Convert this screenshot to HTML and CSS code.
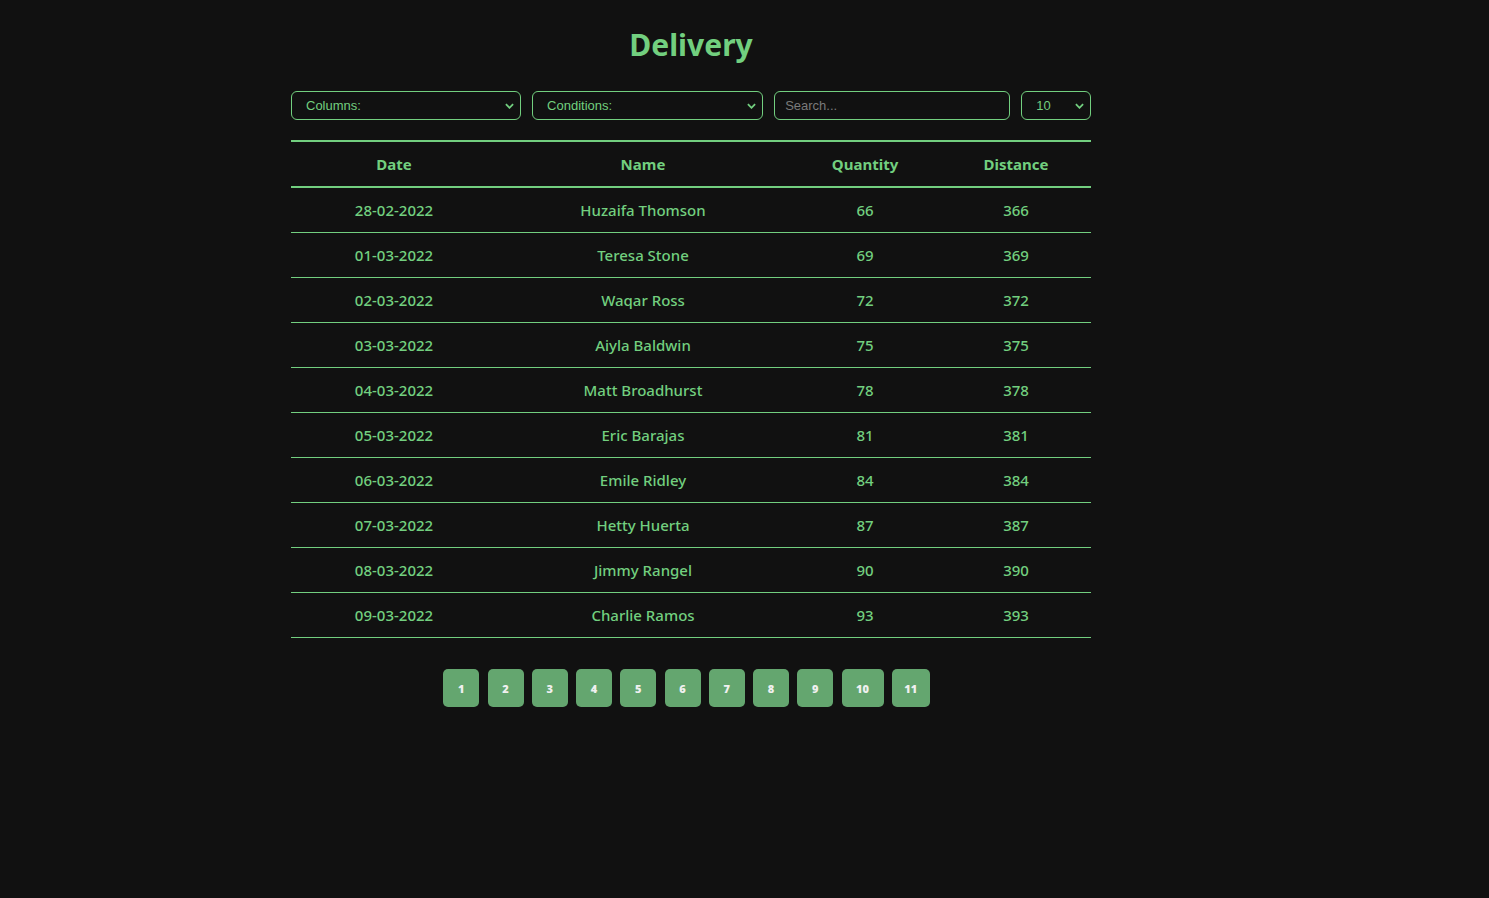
FILE: index.html
```html
<!DOCTYPE html>
<html>
<head>
<meta charset="utf-8">
<link rel="stylesheet" href="styles.css">
</head>
<body>
<main class="wrap">
  <h1 class="title">Delivery</h1>
  <div class="controls">
    <div class="select sel-cols"><span>Columns:</span><svg viewBox="0 0 10 6" class="chev"><path d="M1 1 L5 5 L9 1" /></svg></div>
    <div class="select sel-cond"><span>Conditions:</span><svg viewBox="0 0 10 6" class="chev"><path d="M1 1 L5 5 L9 1" /></svg></div>
    <input class="search" type="text" placeholder="Search...">
    <div class="select sel-size"><span>10</span><svg viewBox="0 0 10 6" class="chev"><path d="M1 1 L5 5 L9 1" /></svg></div>
  </div>
  <table class="grid">
    <colgroup><col class="c1"><col class="c2"><col class="c3"><col class="c4"></colgroup>
    <thead>
      <tr><th>Date</th><th>Name</th><th>Quantity</th><th>Distance</th></tr>
    </thead>
    <tbody>
      <tr><td>28-02-2022</td><td>Huzaifa Thomson</td><td>66</td><td>366</td></tr>
      <tr><td>01-03-2022</td><td>Teresa Stone</td><td>69</td><td>369</td></tr>
      <tr><td>02-03-2022</td><td>Waqar Ross</td><td>72</td><td>372</td></tr>
      <tr><td>03-03-2022</td><td>Aiyla Baldwin</td><td>75</td><td>375</td></tr>
      <tr><td>04-03-2022</td><td>Matt Broadhurst</td><td>78</td><td>378</td></tr>
      <tr><td>05-03-2022</td><td>Eric Barajas</td><td>81</td><td>381</td></tr>
      <tr><td>06-03-2022</td><td>Emile Ridley</td><td>84</td><td>384</td></tr>
      <tr><td>07-03-2022</td><td>Hetty Huerta</td><td>87</td><td>387</td></tr>
      <tr><td>08-03-2022</td><td>Jimmy Rangel</td><td>90</td><td>390</td></tr>
      <tr><td>09-03-2022</td><td>Charlie Ramos</td><td>93</td><td>393</td></tr>
    </tbody>
  </table>
  <nav class="pager">
    <button class="pg">1</button>
    <button class="pg">2</button>
    <button class="pg">3</button>
    <button class="pg">4</button>
    <button class="pg">5</button>
    <button class="pg">6</button>
    <button class="pg">7</button>
    <button class="pg">8</button>
    <button class="pg">9</button>
    <button class="pg wide">10</button>
    <button class="pg last">11</button>
  </nav>
</main>
</body>
</html>
```
FILE: styles.css
```css
html, body {
  margin: 0;
  padding: 0;
  background: #111111;
}
body {
  font-family: "Noto Sans", "Open Sans", sans-serif;
  color: #72cf7f;
}
.wrap {
  width: 800px;
  margin-left: 291px;
  padding-top: 23px;
}
.title {
  margin: 0;
  text-align: center;
  font-size: 30px;
  line-height: 44px;
  font-weight: 700;
  color: #72cf7f;
}
.controls {
  display: flex;
  gap: 11px;
  margin-top: 24px;
}
.select {
  box-sizing: border-box;
  height: 29px;
  border: 1px solid #72cf7f;
  border-radius: 6px;
  display: flex;
  align-items: center;
  justify-content: space-between;
  padding: 0 6px 0 14px;
  font-family: "Liberation Sans", Arial, sans-serif;
  font-size: 13px;
  color: #72cf7f;
}
.sel-cols { width: 231px; }
.sel-cond { width: 232px; }
.sel-size { width: 70px; }
.chev {
  width: 9px;
  height: 6px;
  fill: none;
  stroke: #72cf7f;
  stroke-width: 2;
}
.search {
  box-sizing: border-box;
  width: 237px;
  height: 29px;
  background: transparent;
  border: 1px solid #72cf7f;
  border-radius: 6px;
  padding: 0 10px;
  font-family: "Liberation Sans", Arial, sans-serif;
  font-size: 13px;
  color: #72cf7f;
  outline: none;
}
.search::placeholder { color: #7a7a7a; }
.grid {
  width: 800px;
  margin-top: 20px;
  border-collapse: collapse;
  border-top: 2px solid #72cf7f;
}
.c1 { width: 206px; }
.c2 { width: 292px; }
.c3 { width: 152px; }
.c4 { width: 150px; }
.grid th {
  height: 43px;
  font-size: 15px;
  font-weight: 700;
  text-align: center;
  padding: 0 0 1px;
  border-bottom: 2px solid #72cf7f;
}
.grid td {
  height: 44px;
  font-size: 15px;
  font-weight: 500;
  text-align: center;
  padding: 0;
  border-bottom: 1px solid #72cf7f;
}
.pager {
  display: flex;
  gap: 8.25px;
  justify-content: center;
  margin-top: 31px;
  padding-right: 9px;
}
.pg {
  width: 36px;
  height: 38px;
  border: none;
  border-radius: 5px;
  background: #64a66f;
  color: #f0f0f0;
  font-family: "Open Sans", sans-serif;
  font-weight: 800;
  font-size: 11px;
  padding: 0;
}
.pg.wide { width: 42px; }
.pg.last { width: 38px; }
```
